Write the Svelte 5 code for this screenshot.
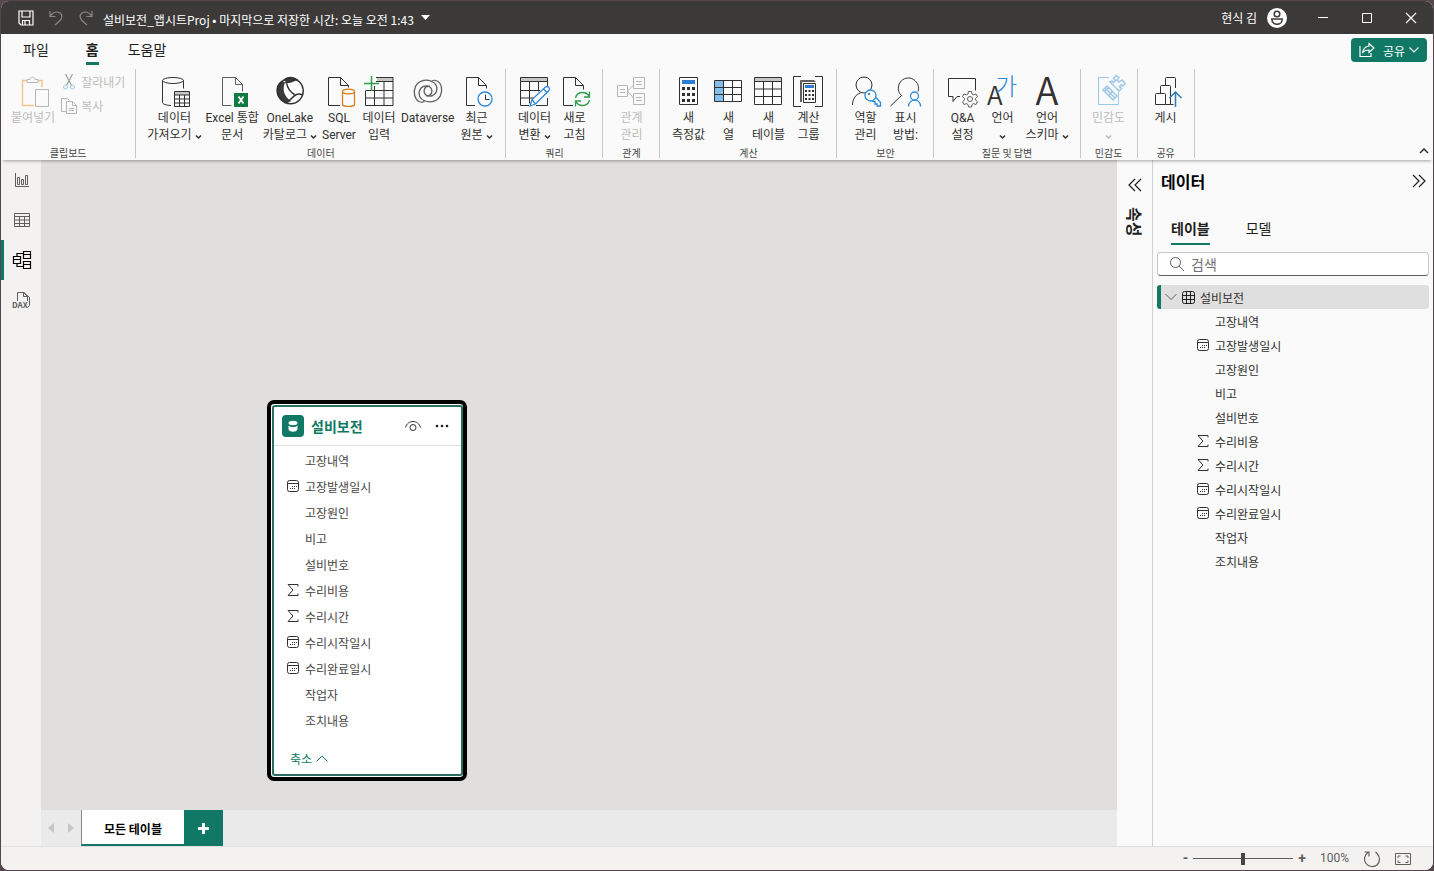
<script>
  const icons = {
    database: `<g class="k"><ellipse cx="15" cy="4.500" rx="10.500" ry="3"/><path d="M4.500 4.500v22c0 1.500 3.500 2.800 8.500 3M25.500 4.500v8"/></g><path d="M16.500 16h15v3h-15z" fill="#c8c6c4"/><g class="k"><path d="M16.500 15.500h15v15h-15zM16.500 19h15M16.500 23h15M16.500 27h15M21.500 19v12M26.500 19v12"/></g>`,
    excel: `<path class="g" d="M15.500 29.500h-9v-28h13l7 7v7M19.500 1.500v7h7"/><path d="M18 17h14v14H18z" fill="#107c41"/><path d="M22.500 20.500l5 7M27.500 20.500l-5 7" stroke="#fff" stroke-width="1.800"/>`,
    onelake: `<circle cx="16" cy="15" r="13" fill="#fff"/><path d="M9.500 4c3-4 10-4.500 14-.5-3 .5-5 1-6.500 2.500C13.500 6.500 11 6 9.500 4zM8 4.500C1 8 0 20 8.500 25.500c3 2 6 1.500 8.500-.5C10 21 8 13 11 6.500 10 6 9 5.500 8 4.500z" fill="#3b3a39"/><circle class="k" cx="16.500" cy="15" r="12.700" stroke-width="1.500"/><path class="k" stroke-width="1.500" d="M11 6.500c3 0 6 0 8-1.500 2-1 3-1.500 5-1M12.500 6.500c1 6 3.500 9.500 8 12M10.500 26.500c5 .5 7-6 12-8 2.500-1 4.500-.5 6 .5"/>`,
    sql: `<path class="k" d="M17 29.500H5.500v-28h12l8 8v2M17.500 1.500v8h8"/><g stroke="#d87a16" fill="#fafafa" stroke-width="1.200"><path d="M19.500 16v12.500c0 1 3 2 6 2s6-1 6-2V16"/><ellipse cx="25.500" cy="15.500" rx="6" ry="2.300"/></g>`,
    enter: `<path d="M14 1.500h16v4H14z" fill="#c8c6c4"/><path class="k" d="M13 1.500h17v28H2.500V15M13 5.500h17M2.500 14.500H30M2.500 22H30M11.500 10v19.500M21 5.500v24"/><path d="M8.500 0v15M1 7.500h15" stroke="#2f9e4c" stroke-width="1.500"/>`,
    dataverse: `<g class="g" stroke-width="1.300"><path d="M20 5.500c-7-3-14-.5-16.500 5C1 16 2.500 23 7 25.500c4 2 6-1 6-1M12 24.500c7 3 14 .5 16.500-5C31 14 29.500 7 25 5c-4-2-6 1-6 1"/><path d="M20 5.500c4 1.500 6 6 4.500 10-1.500 4-6 5.500-9.500 4-2.500-1-3.500-4-2.500-6.500s3.500-3 5.500-2.500"/><path d="M12 24.500c-4-1.500-6-6-4.500-10 1.500-4 6-5.500 9.500-4 2.500 1 3.500 4 2.500 6.500s-3.500 3-5.500 2.500"/></g>`,
    recent: `<path class="k" d="M15 29.500H6.500v-28h12l8 8v3M18.500 1.500v8h8"/><circle cx="25" cy="23" r="7" fill="#fff" stroke="#2b88d8" stroke-width="1.300"/><path class="k" d="M25.500 18.500v5h4"/>`,
    transform: `<path d="M2.500 1.500h27v4h-27z" fill="#c8c6c4"/><path class="k" d="M29.500 10V1.500h-27v28H11M2.500 5.500h27M2.500 14.500H22M2.500 22h13M11.500 5.500v22M20.500 5.500v10M29.500 22v7.500H18"/><path d="M12 30l2-6.500L27.500 11c2.500-1.500 5 1 3.500 3.500L17.500 28zM14 23.500l3.500 4.500M25.500 13l3.500 3.500" fill="#fff" stroke="#2b88d8" stroke-width="1.300"/>`,
    refresh: `<path class="k" d="M15 29.500H5.500v-28h12l8 8v4M17.500 1.500v8h8"/><g fill="none" stroke="#2f9e4c" stroke-width="1.300"><path d="M17.500 22c1-4 3-5.500 7-5.500 3 0 5.500 1.500 6.500 4M31.500 15.500v5.500H26M31.500 24c-1 4-3 5.500-7 5.500-3 0-5.500-1.500-6.500-4M17.500 30.500V25H23"/></g>`,
    relation: `<g class="l"><path d="M2.500 9.500h10v11h-10zM18.500 1.500h11v11h-11zM18.500 17.500h11v11h-11zM5 13.500h5M5 16.500h5M21 5.500h6M21 8.500h6M21 21.500h6M21 24.500h6M12.500 15l6-6M12.500 15l6 7" /></g>`,
    measure: `<path class="k" d="M7.500 1.500h18v27h-18z"/><path d="M10 4h13v4H10z" fill="#2b7cd3"/><g fill="#323130"><path d="M10 11h3v3h-3zM15 11h3v3h-3zM20 11h3v3h-3zM10 17h3v3h-3zM15 17h3v3h-3zM20 17h3v3h-3zM10 23h3v3h-3zM15 23h3v3h-3zM20 23h3v3h-3z"/></g>`,
    column: `<path d="M2.500 4.500h9v21h-9z" fill="#83beec"/><path d="M11.500 4.500h18v21h-18z" fill="#fff"/><path class="k" d="M2.500 4.500h27v21h-27zM2.500 11.500h27M2.500 18.500h27M11.500 4.500v21M20.500 4.500v21"/>`,
    table: `<path d="M2.500 1.500h27v27h-27z" fill="#fff"/><path d="M2.500 1.500h27v4h-27z" fill="#c8c6c4"/><path class="k" d="M2.500 1.500h27v27h-27zM2.500 5.500h27M2.500 13h27M2.500 20.500h27M11.500 5.500v23M20.500 5.500v23"/>`,
    calcgroup: `<path class="k" d="M9 .5H1.500v30H9M23 .5h7.500v30H23"/><path class="g" d="M8.500 26V4.500h14M9.500 26V5.500h14" /><path class="k" d="M11.500 7.500h12v19h-12z"/><path d="M13 9h9v3h-9z" fill="#2b7cd3"/><g fill="#323130"><path d="M13 14h2v2h-2zM16.500 14h2v2h-2zM20 14h2v2h-2zM13 18h2v2h-2zM16.500 18h2v2h-2zM20 18h2v2h-2zM13 22h2v2h-2zM16.500 22h2v2h-2zM20 22h2v2h-2z"/></g>`,
    roles: `<g class="k"><circle cx="15" cy="9" r="8"/><path d="M3.500 29c0-6 3.500-11 8-12"/></g><path d="M27 21.500l4.500 5v3.500h-3.500v-2h-2v-2.500h-2l-1.500-1.500" fill="#fff" stroke="#2b88d8" stroke-width="1.300"/><circle cx="21.500" cy="19.500" r="5.500" fill="#fff" stroke="#2b88d8" stroke-width="1.300"/><circle cx="20" cy="18" r="1.200" fill="#2b88d8"/>`,
    viewas: `<path class="k" d="M13 20c-4-3-5-9-2-13.500s9-6 13.500-3 6 7.500 4.500 12M12.500 19.500L1.500 30"/><g fill="#fff" stroke="#2b88d8" stroke-width="1.300"><path d="M19.500 30.500c.5-8.500 12-8.500 12 0"/><circle cx="25.500" cy="20" r="4"/></g>`,
    qna: `<path class="k" d="M14 20.500h-3l-4 5v-5H2.500v-18h27v12"/><path d="M22.500 15.500h3l.5 2.500 1.500.8 2.500-.8 1.500 2.700-2 1.800v1.500l2 1.700-1.500 2.800-2.500-.9-1.500.9-.5 2.500h-3l-.5-2.500-1.500-.9-2.500.9-1.500-2.800 2-1.700v-1.500l-2-1.800 1.500-2.700 2.500.8 1.500-.8z" fill="#fafafa" stroke="#605e5c"/><circle class="g" cx="24" cy="23" r="2.500"/>`,
    language: `<text x="1" y="29" font-size="26" font-weight="350" fill="#323130">A</text><text x="9" y="19" font-size="24" font-weight="300" fill="#2b88d8">가</text>`,
    schema: `<text x="16" y="29" font-size="38" font-weight="350" text-anchor="middle" fill="#323130">A</text>`,
    sensitivity: `<g fill="none" stroke="#9cc8e8"><path d="M16 1.500H5.500v27h20V16"/><path d="M10 14l4-4 10 10-4 4zM12 12l10 10M11 16l4-4M15 20l5-5" stroke-width="1.500"/><path d="M17 6l9 9 2.500-2.500-2-2 1.500-1.500 2 1 2-3-3-3-3 2-2-2 2-2.500-3-2-2.500 3 2 2-2 2-1.500-1.500z" stroke-width="1.500"/></g>`,
    publish: `<path class="k" d="M5.500 28.500v-10q0-1 1-1h8q1 0 1 1v10zM10.500 17.500v-7q0-1 1-1h8q1 0 1 1v18h-5M15.500 9.500v-7q0-1 1-1h8q1 0 1 1V12M20.500 28.500h3"/><path d="M25.500 31V16M19.500 22l6-6 6 6" fill="none" stroke="#2b7cb3" stroke-width="1.500"/>`
  };

  const groups = [
    { label: '데이터', dense: true, items: [
      { icon: 'database', lines: ['데이터', '가져오기'], menu: true },
      { icon: 'excel', lines: ['Excel 통합', '문서'] },
      { icon: 'onelake', lines: ['OneLake', '카탈로그'], menu: true },
      { icon: 'sql', lines: ['SQL', 'Server'] },
      { icon: 'enter', lines: ['데이터', '입력'] },
      { icon: 'dataverse', lines: ['Dataverse', ''] },
      { icon: 'recent', lines: ['최근', '원본'], menu: true }
    ] },
    { label: '쿼리', items: [
      { icon: 'transform', lines: ['데이터', '변환'], menu: true },
      { icon: 'refresh', lines: ['새로', '고침'] }
    ] },
    { label: '관계', items: [{ icon: 'relation', lines: ['관계', '관리'], disabled: true }] },
    { label: '계산', items: [
      { icon: 'measure', lines: ['새', '측정값'] },
      { icon: 'column', lines: ['새', '열'] },
      { icon: 'table', lines: ['새', '테이블'] },
      { icon: 'calcgroup', lines: ['계산', '그룹'] }
    ] },
    { label: '보안', items: [
      { icon: 'roles', lines: ['역할', '관리'] },
      { icon: 'viewas', lines: ['표시', '방법:'] }
    ] },
    { label: '질문 및 답변', items: [
      { icon: 'qna', lines: ['Q&A', '설정'] },
      { icon: 'language', lines: ['언어', ''], menu: true },
      { icon: 'schema', lines: ['언어', '스키마'], menu: true }
    ] },
    { label: '민감도', items: [{ icon: 'sensitivity', lines: ['민감도', ''], menu: true, disabled: true }] },
    { label: '공유', items: [{ icon: 'publish', lines: ['게시', ''] }] }
  ];

  const fields = [
    { name: '고장내역' },
    { name: '고장발생일시', type: 'date' },
    { name: '고장원인' },
    { name: '비고' },
    { name: '설비번호' },
    { name: '수리비용', type: 'sum' },
    { name: '수리시간', type: 'sum' },
    { name: '수리시작일시', type: 'date' },
    { name: '수리완료일시', type: 'date' },
    { name: '작업자' },
    { name: '조치내용' }
  ];

  let zoom = $state(50);
  let query = $state('');
</script>

{#snippet chevron()}
  <svg class="chev" width="7" height="6" viewBox="0 0 7 6"><path d="M1 1.500l2.500 2.500L6 1.500" fill="none" stroke="currentColor" stroke-width="1.500" /></svg>
{/snippet}

{#snippet typeIcon(type)}
  <svg width="14" height="14" viewBox="0 0 14 14" fill="none" stroke="#323130">
    {#if type === 'date'}
      <rect x="1.500" y="1.500" width="11" height="11" rx="2" />
      <path d="M1.500 4.500h11" />
      <path d="M6 7.500h1M8 7.500h1M10 7.500h1M4 9.500h1M6 9.500h1M8 9.500h1" />
    {:else if type === 'sum'}
      <path d="M12 3.500v-2H2l5 5.500-5 5.500h10v-2" />
    {/if}
  </svg>
{/snippet}

<div class="window">
  <header class="titlebar">
    <button class="bare save" aria-label="저장">
      <svg width="16" height="16" viewBox="0 0 16 16" fill="none" stroke="#fff" stroke-width="1.200"><path d="M1 1h14v14H3l-2-2zM4 1v6h8V1M4.500 15v-4.500h7V15M7 11v4" /></svg>
    </button>
    <button class="bare" aria-label="실행 취소">
      <svg width="16" height="16" viewBox="0 0 16 16" fill="none" stroke="#8a8886" stroke-width="1.200"><path d="M2 1v5.500h5.500M2 6.500C5 2 9 1 12 3c3 2.500 2 5.500 0 7.500L7 15" /></svg>
    </button>
    <button class="bare" aria-label="다시 실행">
      <svg width="16" height="16" viewBox="0 0 16 16" fill="none" stroke="#8a8886" stroke-width="1.200"><path d="M14 1v5.500H8.500M14 6.500C11 2 7 1 4 3 1 5.500 2 8.500 4 10.500L9 15" /></svg>
    </button>
    <button class="bare doc">설비보전_앱시트Proj • 마지막으로 저장한 시간: 오늘 오전 1:43
      <svg width="9" height="5" viewBox="0 0 9 5"><path d="M0 0h9L4.500 5z" fill="#fff" /></svg>
    </button>
    <div class="user">
      <span>현식 김</span>
      <svg width="20" height="20" viewBox="0 0 20 20"><circle cx="10" cy="10" r="10" fill="#fff" /><g fill="none" stroke="#3b3a39" stroke-width="1.500"><circle cx="10" cy="6" r="2.800" /><path d="M4.800 11h10.400c0 7-10.400 7-10.400 0z" /></g></svg>
    </div>
    <div class="controls">
      <button class="bare" aria-label="최소화"><svg width="12" height="12" viewBox="0 0 12 12"><path d="M1 5.500h10" stroke="#fff" /></svg></button>
      <button class="bare" aria-label="최대화"><svg width="12" height="12" viewBox="0 0 12 12"><path d="M1.500 1.500h9v9h-9z" fill="none" stroke="#fff" /></svg></button>
      <button class="bare" aria-label="닫기"><svg width="12" height="12" viewBox="0 0 12 12"><path d="M1 1l10 10M11 1L1 11" stroke="#fff" stroke-width="1.200" /></svg></button>
    </div>
  </header>

  <nav class="menubar">
    <button class="bare">파일</button>
    <button class="bare active">홈</button>
    <button class="bare">도움말</button>
    <button class="share">
      <svg width="16" height="16" viewBox="0 0 16 16" fill="none" stroke="#fff" stroke-width="1.200"><path d="M1 4v10.500h11V11M10 1.500l5 4.500-5 4.500V8C7 8 5 8.500 3.500 11 4 7 6 4.500 10 4z" /></svg>
      공유
      <svg width="10" height="6" viewBox="0 0 10 6"><path d="M.5.500L5 5 9.500.500" fill="none" stroke="#fff" stroke-width="1.200" /></svg>
    </button>
  </nav>

  <div class="ribbon">
    <section class="group">
      <div class="items clipboard">
        <button class="item" disabled>
          <svg width="32" height="32" viewBox="0 0 32 32" fill="none"><path d="M10 4.500H5.500v25H17M20 4.500h5V11" stroke="#f3c68f" stroke-width="1.500" /><path d="M10 6.500v-3h3c0-3 5-3 5 0h3v3zM18.500 13.500h13v17h-13z" fill="#fafafa" stroke="#b8b6b4" /></svg>
          <span>붙여넣기</span>
        </button>
        <div class="small">
          <button class="bare" disabled>
            <svg width="16" height="16" viewBox="0 0 16 16" fill="none"><path d="M4.500 0l6 11.500M11.500 0l-6 11.500" stroke="#a19f9d" stroke-width="1.200" /><circle cx="4.500" cy="13" r="2" stroke="#9cc8e8" /><circle cx="11.500" cy="13" r="2" stroke="#9cc8e8" /></svg>
            잘라내기
          </button>
          <button class="bare" disabled>
            <svg width="16" height="16" viewBox="0 0 16 16" fill="none" stroke="#b8b6b4"><path d="M5.500 13.500h-5V.500h6l2 2M5.500 3.500h6l4 4v8h-10zM11.500 3.500v4h4M8 10.500h5M8 12.500h5" /></svg>
            복사
          </button>
        </div>
      </div>
      <h3>클립보드</h3>
    </section>
    {#each groups as group}
      <section class="group" class:dense={group.dense}>
        <div class="items">
          {#each group.items as item}
            <button class="item" disabled={item.disabled}>
              <svg width="32" height="32" viewBox="0 0 32 32">{@html icons[item.icon]}</svg>
              <span>{item.lines[0]}</span>
              <span>{item.lines[1]}{#if item.menu}{@render chevron()}{/if}</span>
            </button>
          {/each}
        </div>
        <h3>{group.label}</h3>
      </section>
    {/each}
    <button class="bare collapse" aria-label="리본 축소">
      <svg width="10" height="6" viewBox="0 0 10 6"><path d="M1 5l4-4 4 4" fill="none" stroke="#323130" stroke-width="1.500" /></svg>
    </button>
  </div>

  <main class="body">
    <nav class="views">
      <button class="bare" aria-label="보고서 보기"><svg width="16" height="16" viewBox="0 0 16 16" fill="none" stroke="#605e5c"><path d="M1.500 1v13.500H15M3.500 5.500h2v7h-2zM7.500 7.500h2v5h-2zM11.500 3.500h2v9h-2z" /></svg></button>
      <button class="bare" aria-label="테이블 뷰"><svg width="16" height="16" viewBox="0 0 16 16" fill="none" stroke="#605e5c"><path d="M.5 1.500h15v13H.5zM.5 4.500h15M.5 8h15M.5 11.500h15M5.500 4.500v10M10.500 4.500v10" /></svg></button>
      <button class="bare current" aria-label="모델 보기"><svg width="20" height="20" viewBox="0 0 20 20" fill="none" stroke="#000" stroke-width="1.200"><path d="M1.500 6.500h7v7h-7zM1.500 9.500h7M11.500 1.500h7v7h-7zM11.500 4.500h7M11.500 11.500h7v7h-7zM11.500 14.500h7M5 6.500v-3h6.500M5 13.500v3h6.500" /></svg></button>
      <button class="bare" aria-label="DAX 쿼리 보기"><svg width="20" height="20" viewBox="0 0 20 20" fill="none" stroke="#605e5c"><path d="M5.500 11V2.500h6l4 4V11M11.500 2.500v4h4M8 2.500h4l5.500 5v8l-2 2" /><text x="0" y="18" font-size="8" font-weight="700" fill="#605e5c" stroke="none">DAX</text></svg></button>
    </nav>

    <section class="model">
      <div class="canvas">
        <article class="card">
          <div class="inner">
            <header>
              <svg width="22" height="22" viewBox="0 0 22 22"><rect width="22" height="22" rx="4" fill="#117865" /><path d="M6.500 8c0-3 9-3 9 0s-9 3-9 0zM6.500 10.500c2 2 7 2 9 0V14c0 3.500-9 3.500-9 0z" fill="#fff" /></svg>
              <h2>설비보전</h2>
              <button class="bare" aria-label="표시"><svg width="16" height="12" viewBox="0 0 16 12" fill="none" stroke="#323130"><path d="M.5 7.500C2.500-.500 13.500-.500 15.500 7.500" /><circle cx="8" cy="7.500" r="3" /></svg></button>
              <button class="bare" aria-label="추가 옵션"><svg width="14" height="4" viewBox="0 0 14 4" fill="#201f1e"><circle cx="2" cy="2" r="1.300" /><circle cx="7" cy="2" r="1.300" /><circle cx="12" cy="2" r="1.300" /></svg></button>
            </header>
            <ul>
              {#each fields as field}
                <li>{@render typeIcon(field.type)}{field.name}</li>
              {/each}
            </ul>
            <button class="bare fold">축소 <svg width="12" height="7" viewBox="0 0 12 7"><path d="M.5 6.500L6 1l5.500 5.500" fill="none" stroke="currentColor" /></svg></button>
          </div>
        </article>
      </div>
      <footer class="sheets">
        <button class="bare arrow" aria-label="이전"><svg width="6" height="10" viewBox="0 0 6 10"><path d="M6 0v10L0 5z" fill="#c8c6c4" /></svg></button>
        <button class="bare arrow" aria-label="다음"><svg width="6" height="10" viewBox="0 0 6 10"><path d="M0 0v10l6-5z" fill="#c8c6c4" /></svg></button>
        <button class="sheet">모든 테이블</button>
        <button class="add" aria-label="새 레이아웃"><svg width="11" height="11" viewBox="0 0 11 11"><path d="M5.500 0v11M0 5.500h11" stroke="#fff" stroke-width="3" /></svg></button>
      </footer>
    </section>

    <aside class="properties">
      <button class="bare" aria-label="확장"><svg width="14" height="14" viewBox="0 0 14 14" fill="none" stroke="#201f1e" stroke-width="1.200"><path d="M7 1L1 7l6 6M13 1L7 7l6 6" /></svg></button>
      <h2>속성</h2>
    </aside>

    <aside class="data">
      <header>
        <h2>데이터</h2>
        <button class="bare" aria-label="축소"><svg width="14" height="14" viewBox="0 0 14 14" fill="none" stroke="#201f1e" stroke-width="1.200"><path d="M1 1l6 6-6 6M7 1l6 6-6 6" /></svg></button>
      </header>
      <div class="tabs">
        <button class="bare active">테이블</button>
        <button class="bare">모델</button>
      </div>
      <label class="search">
        <svg width="14" height="14" viewBox="0 0 14 14" fill="none" stroke="#605e5c"><circle cx="5.500" cy="5.500" r="5" /><path d="M9 9l5 5" /></svg>
        <input type="text" placeholder="검색" aria-label="검색" bind:value={query} />
      </label>
      <button class="bare node">
        <svg width="12" height="8" viewBox="0 0 12 8"><path d="M.5 1L6 6.500 11.500 1" fill="none" stroke="#605e5c" /></svg>
        <svg width="13" height="13" viewBox="0 0 13 13" fill="none" stroke="#201f1e"><rect x=".5" y=".5" width="12" height="12" rx="2" /><path d="M4.500.500v12M8.500.500v12M.5 4.500h12M.5 8.500h12" /></svg>
        설비보전
      </button>
      <ul>
        {#each fields as field}
          <li>{@render typeIcon(field.type)}{field.name}</li>
        {/each}
      </ul>
    </aside>
  </main>

  <footer class="status">
    <button class="bare" aria-label="축소">-</button>
    <input type="range" min="0" max="100" aria-label="확대/축소" bind:value={zoom} />
    <button class="bare" aria-label="확대">+</button>
    <span>100%</span>
    <button class="bare" aria-label="다시 설정"><svg width="18" height="18" viewBox="0 0 18 18" fill="none" stroke="#605e5c" stroke-width="1.200"><path d="M5 2.500C1 5 .5 10 3 13.500s8 4 11 1.500 3.500-8 0-11.500L12.500 2M1.500 2h4.500v4.500" /></svg></button>
    <button class="bare" aria-label="페이지에 맞추기"><svg width="16" height="12" viewBox="0 0 16 12" fill="none" stroke="#605e5c"><path d="M.5.500h15v11H.5zM3 5V3h2.500M10.500 3H13v2M13 7.500V9.500h-2.500M5.500 9.500H3V7.500" /></svg></button>
  </footer>
</div>

<style>
  :global(body) {
    background: #55454c;
  }
  .window {
    box-sizing: border-box;
    display: flex;
    flex-direction: column;
    height: calc(100vh - 2px);
    margin: 1px;
    overflow: hidden;
    border-radius: 8px;
    background: #fafafa;
    color: #323130;
    font: 12px/17px "Noto Sans CJK KR", "Noto Sans", sans-serif;
  }
  h2, h3, ul {
    margin: 0;
    padding: 0;
    list-style: none;
  }
  button, input {
    font: inherit;
    color: inherit;
  }
  svg {
    display: block;
    flex: none;
  }
  .bare {
    display: flex;
    align-items: center;
    justify-content: center;
    padding: 0;
    border: 0;
    background: none;
  }

  .titlebar {
    display: flex;
    align-items: center;
    flex: none;
    height: 33px;
    gap: 14px;
    padding-left: 17px;
    background: #3b3a39;
    color: #fff;
  }
  .titlebar .doc {
    gap: 7px;
    padding-top: 4px;
    margin-left: -5px;
  }
  .doc svg {
    margin-bottom: 4px;
  }
  .user {
    display: flex;
    align-items: center;
    gap: 10px;
    margin-left: auto;
  }
  .controls {
    display: flex;
  }
  .controls button {
    width: 44px;
    height: 33px;
  }

  .menubar {
    display: flex;
    align-items: center;
    flex: none;
    height: 32px;
    gap: 37px;
    padding: 0 6px 0 22px;
    font-size: 14px;
    color: #201f1e;
  }
  .menubar .bare {
    height: 30px;
    padding-top: 2px;
    border-bottom: 3px solid transparent;
    box-sizing: border-box;
  }
  .menubar .bare:nth-child(3) {
    margin-left: -8px;
  }
  .menubar .active {
    font-weight: 700;
    border-color: #117865;
  }
  .share {
    display: flex;
    align-items: center;
    gap: 8px;
    height: 24px;
    margin-left: auto;
    padding: 0 8px;
    border: 0;
    border-radius: 4px;
    background: #117865;
    color: #fff;
    font-size: 12px;
  }
  .share svg:last-child {
    margin-left: -4px;
  }

  .ribbon {
    display: flex;
    flex: none;
    height: 94px;
    position: relative;
    z-index: 1;
    box-shadow: 0 3px 3px -2px rgba(0, 0, 0, 0.35);
    background: #fafafa;
  }
  .group {
    display: flex;
    flex-direction: column;
    align-items: center;
    margin: 3px 0 2px;
    padding: 0 8px;
    border-right: 1px solid #c8c6c4;
  }
  .group.dense {
    padding: 0 9px;
  }
  .items {
    display: flex;
    flex: 1;
    padding-top: 7px;
  }
  .item {
    display: flex;
    flex-direction: column;
    align-items: center;
    min-width: 40px;
    padding: 0 3px;
    border: 0;
    background: none;
    white-space: nowrap;
  }
  .item span {
    font-family: Roboto, "Noto Sans CJK KR", sans-serif;
  }
  .dense .item {
    padding: 0 2px;
  }
  .item svg {
    margin-bottom: 2px;
    overflow: visible;
  }
  .item span {
    display: flex;
    align-items: center;
    gap: 3px;
    height: 17px;
  }
  .item .chev {
    margin: 2px 0 0;
  }
  button:disabled {
    color: #bebcba;
  }
  .clipboard .item {
    padding-left: 2px;
  }
  .small {
    display: flex;
    flex-direction: column;
    gap: 7px;
    margin: -3px 2px 0 0;
    padding-left: 3px;
  }
  .small button {
    justify-content: flex-start;
    gap: 4px;
  }
  .group h3 {
    font-size: 10px;
    font-weight: 400;
    line-height: 10px;
    color: #484644;
  }
  .collapse {
    margin: auto 4px 6px auto;
  }
  .ribbon :global(.k) {
    fill: none;
    stroke: #323130;
  }
  .ribbon :global(.g) {
    fill: none;
    stroke: #605e5c;
  }
  .ribbon :global(.l) {
    fill: none;
    stroke: #b8b6b4;
  }

  .body {
    display: flex;
    flex: 1;
    min-height: 0;
  }
  .views {
    width: 40px;
    flex: none;
    background: #f3f2f1;
  }
  .views button {
    box-sizing: border-box;
    width: 100%;
    height: 40px;
    padding-right: 1px;
    border-left: 3px solid transparent;
  }
  .views .current {
    border-color: #117865;
  }
  .model {
    display: flex;
    flex-direction: column;
    flex: 1;
  }
  .canvas {
    position: relative;
    flex: 1;
    background: #e1dfdd;
  }
  .card {
    position: absolute;
    left: 226px;
    top: 240px;
    box-sizing: border-box;
    width: 200px;
    padding: 1px 0 1px 1px;
    border: 4px solid #000;
    border-radius: 7px;
    background: #fff;
  }
  .inner {
    border: 2px solid #2a6f62;
    border-radius: 3px;
    padding-bottom: 7px;
  }
  .card header {
    display: flex;
    align-items: center;
    gap: 14px;
    height: 38px;
    padding: 0 12px 0 8px;
    border-bottom: 1px solid #e1dfdd;
  }
  .card h2 {
    flex: 1;
    margin-left: -7px;
    font-size: 14px;
    color: #117865;
  }
  .card ul {
    padding: 1px 0 16px 12px;
  }
  li {
    display: flex;
    align-items: center;
    gap: 5px;
    height: 26px;
    color: #484644;
  }
  .fold {
    gap: 4px;
    height: 18px;
    margin-left: 16px;
    color: #117865;
  }
  .sheets {
    display: flex;
    height: 36px;
    background: #eaeaea;
  }
  .arrow {
    width: 20px;
  }
  .sheet {
    box-sizing: border-box;
    padding: 2px 22px 0;
    border: 0;
    border-left: 1px solid #8a8886;
    border-bottom: 2px solid #117865;
    background: #fff;
    color: #000;
    font-weight: 700;
  }
  .add {
    display: flex;
    align-items: center;
    justify-content: center;
    width: 39px;
    border: 0;
    background: #117865;
  }

  .properties {
    display: flex;
    flex-direction: column;
    align-items: center;
    width: 36px;
    flex: none;
    gap: 15px;
    padding-top: 18px;
    box-sizing: border-box;
    border-right: 1px solid #d2d0ce;
  }
  .properties h2 {
    writing-mode: vertical-rl;
    text-orientation: sideways;
    font-size: 16px;
    color: #201f1e;
  }
  .data {
    width: 280px;
    flex: none;
    box-sizing: border-box;
    padding: 0 4px;
  }
  .data header {
    display: flex;
    align-items: center;
    justify-content: space-between;
    height: 42px;
    padding: 0 3px 0 4px;
  }
  .data h2 {
    font-size: 16px;
    color: #000;
  }
  .tabs {
    display: flex;
    gap: 36px;
    padding: 12px 14px 7px;
    font-size: 14px;
    color: #201f1e;
  }
  .tabs button {
    height: 31px;
    border-bottom: 2px solid transparent;
    box-sizing: border-box;
  }
  .tabs .active {
    border-color: #117865;
    font-weight: 700;
  }
  .search {
    display: flex;
    align-items: center;
    gap: 7px;
    box-sizing: border-box;
    height: 24px;
    padding: 0 12px;
    border: 1px solid #c8c6c4;
    border-bottom-color: #605e5c;
    border-radius: 4px;
    background: #fff;
    font-size: 14px;
  }
  .search input {
    flex: 1;
    min-width: 0;
    padding: 0;
    border: 0;
    outline: 0;
    background: none;
  }
  .search input::placeholder {
    color: #706e6c;
  }
  .node {
    width: 100%;
    height: 24px;
    margin-top: 9px;
    justify-content: flex-start;
    gap: 5px;
    padding-left: 4px;
    border-left: 4px solid #117865;
    border-radius: 3px;
    background: #dfdfdf;
  }
  .data ul {
    padding-left: 39px;
  }
  .data li {
    height: 24px;
    color: #323130;
  }

  .status {
    display: flex;
    align-items: center;
    justify-content: flex-end;
    flex: none;
    gap: 14px;
    height: 24px;
    padding-right: 22px;
    box-sizing: border-box;
    border-top: 1px solid #e1dfdd;
    background: #f3f2f1;
    color: #605e5c;
    font-family: Roboto, sans-serif;
  }
  .status button:nth-of-type(-n + 2) {
    font-size: 14px;
    font-weight: 700;
  }
  .status input {
    appearance: none;
    width: 100px;
    height: 12px;
    margin: 0 -9px;
    background: linear-gradient(#605e5c, #605e5c) center / 100% 1px no-repeat;
  }
  .status input::-webkit-slider-thumb {
    appearance: none;
    width: 4px;
    height: 12px;
    background: #484644;
  }
</style>
